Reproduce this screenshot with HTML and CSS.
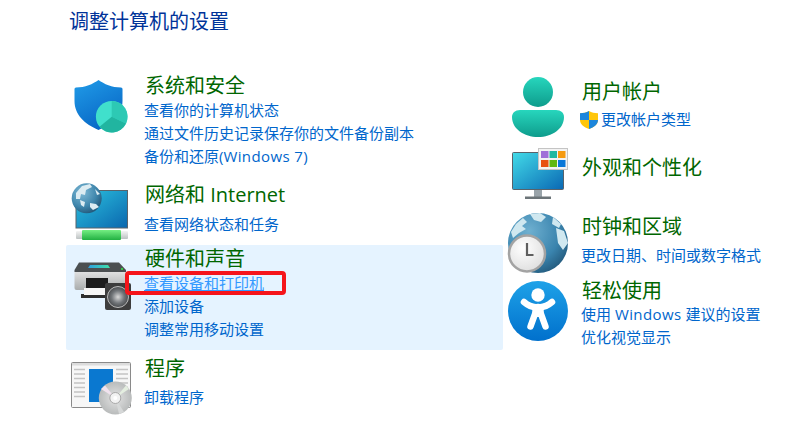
FILE: index.html
```html
<!DOCTYPE html>
<html lang="zh-CN">
<head>
    <meta charset="UTF-8">
    <title>控制面板</title>
    <link rel="stylesheet" href="styles.css">
</head>
<body>
    <h1 class="page-title">调整计算机的设置</h1>

    <main class="columns">
        <div class="col col-left">
            <section class="item item-system">
                <div class="ico">
                    <svg class="svg-shield" width="54" height="53" viewBox="74 80 54 53">
                        <defs>
                            <linearGradient id="sh" x1="0" y1="0" x2="0.5" y2="1"><stop offset="0" stop-color="#219ce8"/><stop offset="1" stop-color="#0868c6"/></linearGradient>
                        </defs>
                        <path d="M98.500 80C93 84 85 87.500 76 87.500Q74.500 87.500 74.500 89V101C74.500 115 85 124 98.500 130C112 124 122.500 115 122.500 101V89Q122.500 87.500 121 87.500C112 87.500 104 84 98.500 80Z" fill="url(#sh)"/>
                        <circle cx="111.700" cy="116.700" r="15.800" fill="#40e0cc"/>
                        <path d="M111.700 116.700V100.900A15.800 15.800 0 0 1 126 123.400Z" fill="#2dc9b4"/>
                        <path d="M111.700 116.700L126 123.400A15.800 15.800 0 0 1 99.500 126.800Z" fill="#21b5a0"/>
                    </svg>
                </div>
                <div class="text">
                    <h2>系统和安全</h2>
                    <a href="#">查看你的计算机状态</a>
                    <a href="#">通过文件历史记录保存你的文件备份副本</a>
                    <a href="#">备份和还原(<span class="en">Windows 7</span>)</a>
                </div>
            </section>

            <section class="item item-network">
                <div class="ico">
                    <svg class="svg-network" width="58" height="58" viewBox="71 183 58 58">
                        <defs>
                            <linearGradient id="mon" x1="0" y1="0" x2="1" y2="1"><stop offset="0" stop-color="#2cc4e0"/><stop offset="1" stop-color="#0a66ae"/></linearGradient>
                            <radialGradient id="glb" cx="0.35" cy="0.3" r="0.8"><stop offset="0" stop-color="#7fbad6"/><stop offset="0.6" stop-color="#3f86ac"/><stop offset="1" stop-color="#1d4f70"/></radialGradient>
                            <linearGradient id="bar" x1="0" y1="0" x2="0" y2="1"><stop offset="0" stop-color="#74ee82"/><stop offset="1" stop-color="#22b042"/></linearGradient>
                            <linearGradient id="silver" x1="0" y1="0" x2="0" y2="1"><stop offset="0" stop-color="#f4f4f4"/><stop offset="1" stop-color="#bcc2c2"/></linearGradient>
                        </defs>
                        <rect x="76" y="190.500" width="51.500" height="37.500" fill="url(#mon)" stroke="#59626a"/>
                        <rect x="76" y="231" width="52" height="8" rx="1" fill="url(#silver)"/>
                        <rect x="82" y="230" width="39" height="10" rx="1" fill="url(#bar)"/>
                        <circle cx="86.700" cy="198.300" r="15" fill="url(#glb)"/>
                        <path d="M76 193L82 186L90 184L92 187L86 190L85 195L81 194L80 199L76 199ZM80 200L85 202L84 207L81 205ZM90 203L96 204L99 207L93 210L90 207ZM95 189L100 194L97 195Z" fill="#dcecf2"/>
                    </svg>
                </div>
                <div class="text">
                    <h2>网络和 Internet</h2>
                    <a href="#">查看网络状态和任务</a>
                </div>
            </section>

            <section class="item item-hardware">
                <div class="ico">
                    <svg class="svg-printer" width="58" height="49" viewBox="74 262 58 49">
                        <defs>
                            <linearGradient id="prn" x1="0" y1="0" x2="0" y2="1"><stop offset="0" stop-color="#e6e6e6"/><stop offset="1" stop-color="#a9acac"/></linearGradient>
                            <linearGradient id="strip" x1="0" y1="0" x2="1" y2="0"><stop offset="0" stop-color="#2f9fe0"/><stop offset="1" stop-color="#3fe0a8"/></linearGradient>
                            <radialGradient id="cone" cx="0.5" cy="0.5" r="0.5"><stop offset="0" stop-color="#d8d8d8"/><stop offset="0.6" stop-color="#707478"/><stop offset="1" stop-color="#4a4c4e"/></radialGradient>
                        </defs>
                        <rect x="74.500" y="270" width="51.500" height="20" rx="2" fill="url(#prn)"/>
                        <path d="M79 262.500H119L126 270V272H74.500V270Z" fill="#4b4f51"/>
                        <path d="M90 265H108L110 268H88Z" fill="url(#strip)"/>
                        <rect x="121" y="268" width="2" height="2" fill="#37c84a"/>
                        <rect x="86" y="278" width="22" height="11" fill="#1c1c1c"/>
                        <rect x="81" y="294" width="27" height="4" fill="#2e2e2e"/>
                        <rect x="84" y="288" width="24" height="7" fill="#f6f6f6"/>
                        <rect x="105" y="283" width="26" height="27" rx="2" fill="#3d3d3d"/>
                        <circle cx="118" cy="297" r="10.500" fill="url(#cone)" stroke="#bcbcbc"/>
                    </svg>
                </div>
                <div class="text">
                    <h2>硬件和声音</h2>
                    <a href="#" class="hover">查看设备和打印机</a>
                    <a href="#">添加设备</a>
                    <a href="#">调整常用移动设置</a>
                </div>
                <div class="red-box"></div>
            </section>

            <section class="item item-programs">
                <div class="ico">
                    <svg class="svg-programs" width="62" height="54" viewBox="70 361 62 54">
                        <defs>
                            <radialGradient id="cd" cx="0.5" cy="0.5" r="0.6"><stop offset="0" stop-color="#e4e4e4"/><stop offset="1" stop-color="#b0b3b3"/></radialGradient>
                        </defs>
                        <rect x="71.500" y="362.500" width="59" height="45" rx="1" fill="#f7f7f7" stroke="#8a8a8a"/>
                        <rect x="72" y="363" width="58" height="2.500" fill="#dcdcdc"/>
                        <rect x="89" y="369" width="24" height="33" fill="#0a78d0"/>
                        <path d="M74 369.500H85M74 374H85M74 378.500H85M74 383H85M74 387.500H85M74 392H85M74 396.500H85M116 369.500H128M116 374H128M116 378.500H128M116 383H128M116 387.500H128" stroke="#c4c4c4" stroke-width="1.500"/>
                        <circle cx="115.300" cy="398" r="16.500" fill="url(#cd)"/>
                        <path d="M115.300 398L101 389L105 385.500Z" fill="#f0e2ee"/>
                        <path d="M115.300 398L126 385.500L129 389Z" fill="#e4eee0"/>
                        <path d="M115.300 398L124 412L119 414Z" fill="#d6d8d8"/>
                        <circle cx="115.300" cy="398" r="5.500" fill="#f2f2f2" stroke="#a8a8a8"/>
                        <circle cx="115.300" cy="398" r="2" fill="#fff"/>
                    </svg>
                </div>
                <div class="text">
                    <h2>程序</h2>
                    <a href="#" class="gap-link">卸载程序</a>
                </div>
            </section>
        </div>

        <div class="col col-right">
            <section class="item item-user">
                <div class="ico">
                    <svg class="svg-user" width="56" height="62" viewBox="510 76 56 62">
                        <defs>
                            <linearGradient id="tl" x1="0" y1="0" x2="0" y2="1"><stop offset="0" stop-color="#27d6bd"/><stop offset="1" stop-color="#0e9c8c"/></linearGradient>
                        </defs>
                        <circle cx="538" cy="92" r="15" fill="url(#tl)"/>
                        <path d="M520 110H556C561 110 564 113 564 117C564 129 552 137 538 137C524 137 512 129 512 117C512 113 515 110 520 110Z" fill="url(#tl)"/>
                    </svg>
                </div>
                <div class="text">
                    <h2>用户帐户</h2>
                    <a href="#" class="shield-link">
                        <svg width="18" height="18" viewBox="0 0 18 18">
                            <path d="M9 0C6.500 1.500 3.500 2.200 0 2.200V9C0 13 4 16.500 9 18C14 16.500 18 13 18 9V2.200C14.500 2.200 11.500 1.500 9 0Z" fill="#ffc60a"/>
                            <path d="M9 0C6.500 1.500 3.500 2.200 0 2.200V9H9Z" fill="#1c86dc"/>
                            <path d="M9 9H18C18 13 14 16.500 9 18Z" fill="#1c86dc"/>
                        </svg>
                        更改帐户类型
                    </a>
                </div>
            </section>

            <section class="item item-look">
                <div class="ico">
                    <svg class="svg-look" width="58" height="52" viewBox="511 148 58 52">
                        <defs>
                            <linearGradient id="mon2" x1="0" y1="0" x2="1" y2="1"><stop offset="0" stop-color="#42dbe8"/><stop offset="1" stop-color="#0a68b4"/></linearGradient>
                        </defs>
                        <rect x="534" y="190" width="8" height="7" fill="#9aa4aa"/>
                        <rect x="525" y="196.500" width="26" height="2.500" fill="#6c7478"/>
                        <rect x="512.500" y="152.500" width="51" height="37" rx="1" fill="url(#mon2)" stroke="#59626a"/>
                        <rect x="538.500" y="148.500" width="29" height="21" fill="#f3f3f3" stroke="#c4c4c4"/>
                        <rect x="541" y="151" width="7.500" height="7" fill="#a070d8"/>
                        <rect x="549.500" y="151" width="7.500" height="7" fill="#20b8a0"/>
                        <rect x="558" y="151" width="7.500" height="7" fill="#f59a10"/>
                        <rect x="541" y="160" width="7.500" height="7" fill="#e85010"/>
                        <rect x="549.500" y="160" width="7.500" height="7" fill="#60b810"/>
                        <rect x="558" y="160" width="7.500" height="7" fill="#0a78d8"/>
                    </svg>
                </div>
                <div class="text">
                    <h2>外观和个性化</h2>
                </div>
            </section>

            <section class="item item-clock">
                <div class="ico">
                    <svg class="svg-clock" width="62" height="62" viewBox="507 212 62 62">
                        <defs>
                            <radialGradient id="glb2" cx="0.35" cy="0.3" r="0.85"><stop offset="0" stop-color="#6fb0d0"/><stop offset="0.6" stop-color="#3a84ae"/><stop offset="1" stop-color="#1c4d6d"/></radialGradient>
                            <radialGradient id="face" cx="0.4" cy="0.35" r="0.8"><stop offset="0" stop-color="#ffffff"/><stop offset="1" stop-color="#d9d9d9"/></radialGradient>
                        </defs>
                        <circle cx="538" cy="243" r="30" fill="url(#glb2)"/>
                        <path d="M511 232L516 224L523 218L527 222L522 226L526 229L519 233L513 238ZM530 214L540 213L546 217L541 222L534 220ZM553 217L561 224L559 228L552 224ZM556 228L564 231L568 243L563 250L558 243Z" fill="#d0e8f0"/>
                        <circle cx="527" cy="253.500" r="18" fill="url(#face)" stroke="#a3a3a3" stroke-width="2.500"/>
                        <path d="M527 243V255H533.500" fill="none" stroke="#5f5f5f" stroke-width="2.200"/>
                    </svg>
                </div>
                <div class="text">
                    <h2>时钟和区域</h2>
                    <a href="#" class="gap-link">更改日期、时间或数字格式</a>
                </div>
            </section>

            <section class="item item-ease">
                <div class="ico">
                    <svg class="svg-ease" width="62" height="62" viewBox="507 280 62 62">
                        <defs>
                            <linearGradient id="ea" x1="0" y1="0" x2="0" y2="1"><stop offset="0" stop-color="#1ea2e8"/><stop offset="1" stop-color="#0070cc"/></linearGradient>
                        </defs>
                        <circle cx="538" cy="311" r="30" fill="url(#ea)"/>
                        <circle cx="538" cy="295" r="6.700" fill="#fff"/>
                        <path d="M524 302Q531 308 538 307Q545 308 552 302" fill="none" stroke="#fff" stroke-width="6.500" stroke-linecap="round"/>
                        <path d="M532.500 305H543.500L544 317H532Z" fill="#fff"/>
                        <path d="M535 314L530.500 326.500M541 314L545.500 326.500" fill="none" stroke="#fff" stroke-width="6.500" stroke-linecap="round"/>
                    </svg>
                </div>
                <div class="text">
                    <h2>轻松使用</h2>
                    <a href="#">使用 <span class="en">Windows</span> 建议的设置</a>
                    <a href="#">优化视觉显示</a>
                </div>
            </section>
        </div>
    </main>
</body>
</html>
```

FILE: styles.css
```css
body {
    margin: 0;
    background-color: #fff;
    font-family: "Open Sans", "Noto Sans CJK SC", sans-serif;
    overflow: hidden;
}

.page-title {
    margin: 0;
    padding: 8px 0 0 69px;
    font-size: 20px;
    font-weight: normal;
    line-height: 28px;
    color: #003399;
}

.columns {
    display: flex;
    padding-left: 66px;
    margin-top: 35px;
}

.col-left {
    width: 437px;
    flex: none;
}

.col-right {
    flex: 1;
    padding-top: 5px;
}

.item {
    display: flex;
    position: relative;
}

.ico {
    flex: none;
    width: 78px;
}

.ico svg {
    display: block;
}

.col-right .ico {
    width: 79px;
}

.text h2 {
    margin: 0 0 -2px;
    padding-left: 1px;
    font-size: 20px;
    font-weight: normal;
    line-height: 30px;
    color: #006600;
}

.col-right .text h2 {
    padding-left: 0;
}

.text a {
    display: block;
    font-size: 15px;
    line-height: 23px;
    color: #0066cc;
    text-decoration: none;
    white-space: nowrap;
}

.col-right .text a {
    margin-left: -1px;
}

.text a.hover {
    color: #3399ff;
    text-decoration: underline;
}

.en {
    letter-spacing: 0.4px;
}

/* left column rows */
.item-network {
    margin-top: 12px;
}

.item-network h2 {
    margin-bottom: 3px;
}

.item-hardware {
    margin-top: 4px;
    height: 105px;
    background-color: #e5f3ff;
    border-radius: 2px;
}

.item-hardware h2 {
    line-height: 28px;
    margin-bottom: -1px;
}

.item-programs {
    margin-top: 4px;
}

.text .gap-link {
    margin-top: 4px;
}

.red-box {
    position: absolute;
    left: 59px;
    top: 26px;
    width: 153px;
    height: 16px;
    border: 4px solid #f5141a;
    border-radius: 4px;
}

/* icon offsets */
.svg-shield { margin: 9px 0 0 8px; }
.svg-network { margin: 3px 0 0 5px; }
.svg-printer { margin: 17px 0 0 8px; }
.svg-programs { margin: 7px 0 0 4px; }
.svg-user { margin: 0 0 0 7px; }
.svg-look { margin: -5px 0 0 8px; }
.svg-clock { margin: 0 0 0 4px; }
.svg-ease { margin: 4px 0 0 4px; }

/* right column rows */
.item-user h2 {
    padding-top: 1px;
}

.col-right .text .shield-link {
    display: flex;
    align-items: center;
    gap: 3px;
    margin: 3px 0 0 -2px;
}

.item-look {
    margin-top: 15px;
}

.item-clock {
    margin-top: 12px;
}

.item-ease {
    margin-top: 2px;
}

.item-ease h2 {
    margin-bottom: -3px;
}
```
